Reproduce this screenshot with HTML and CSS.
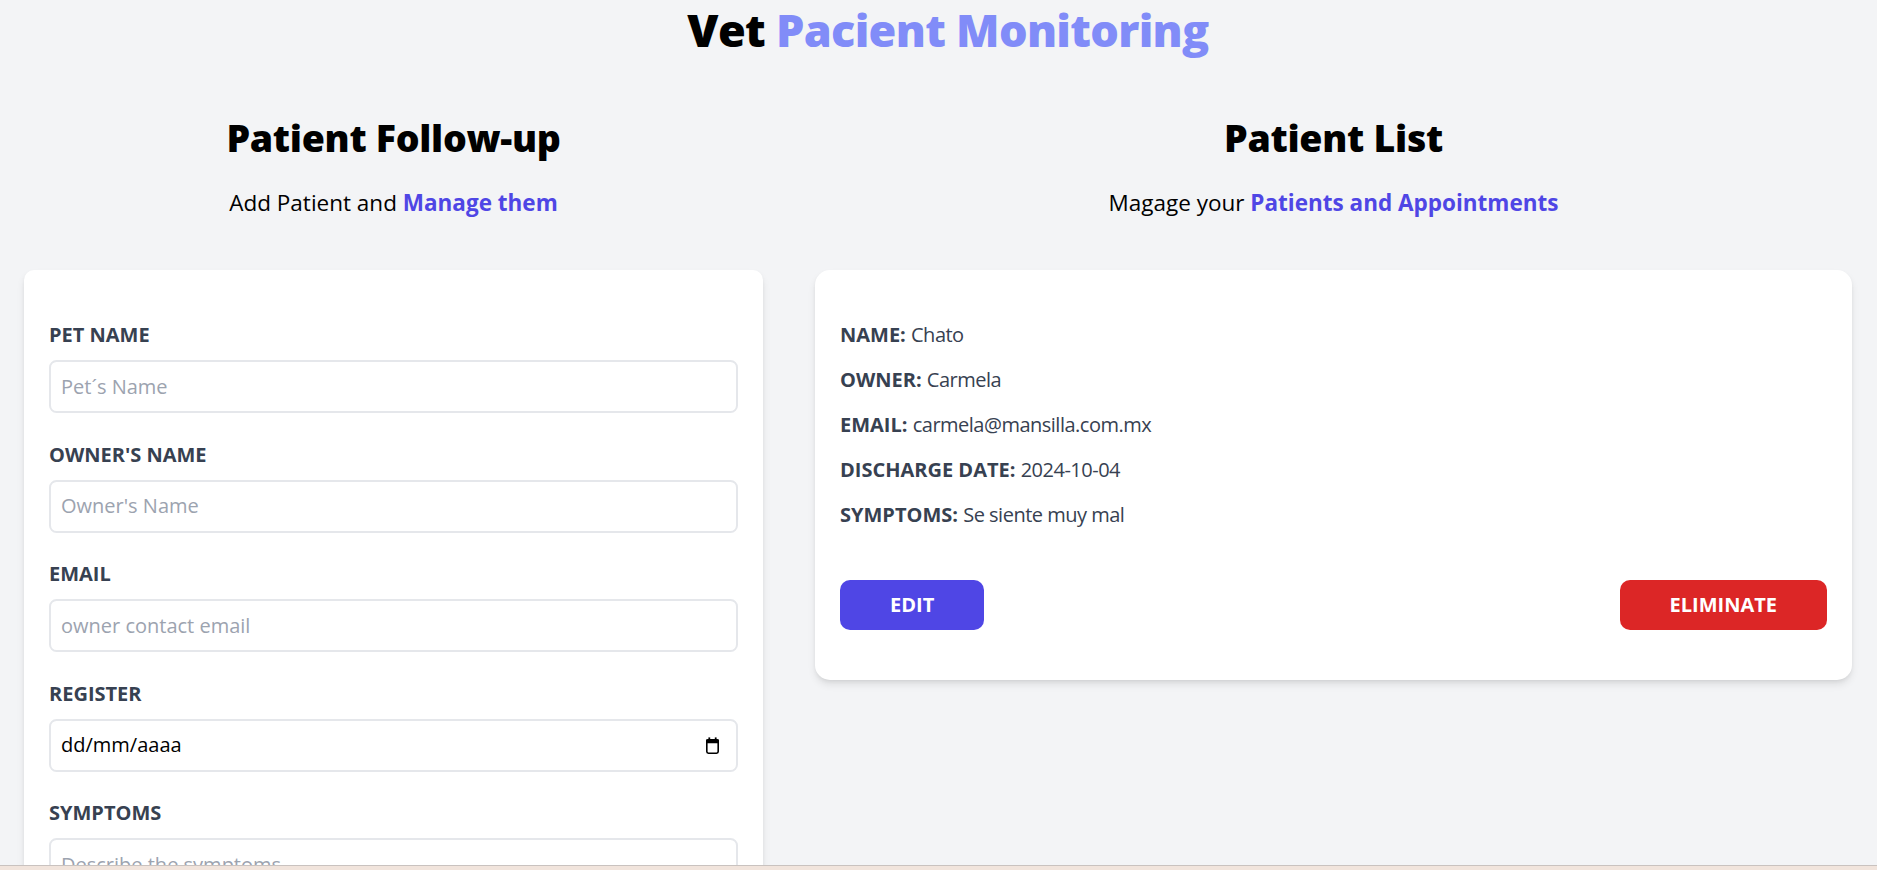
FILE: index.html
```html
<!DOCTYPE html>
<html lang="en">
<head>
<meta charset="utf-8">
<title>Vet Pacient Monitoring</title>
<link rel="stylesheet" href="styles.css">
</head>
<body>
<div class="app">
  <h1 class="title">Vet <span class="title-accent">Pacient Monitoring</span></h1>
  <div class="columns">
    <section class="col col-form">
      <h2 class="heading">Patient Follow-up</h2>
      <p class="sub">Add Patient and <span class="sub-accent">Manage them</span></p>
      <form class="card form-card">
        <div class="field">
          <label class="label" for="pet">Pet Name</label>
          <input class="input" id="pet" type="text" placeholder="Pet´s Name">
        </div>
        <div class="field">
          <label class="label" for="owner">Owner's Name</label>
          <input class="input" id="owner" type="text" placeholder="Owner's Name">
        </div>
        <div class="field">
          <label class="label" for="email">Email</label>
          <input class="input" id="email" type="email" placeholder="owner contact email">
        </div>
        <div class="field">
          <label class="label">Register</label>
          <div class="input date-input">
            <span class="date-text">dd/mm/aaaa</span>
            <svg class="cal-icon" width="15" height="17" viewBox="0 0 15 17" aria-hidden="true">
              <rect x="1.8" y="2.8" width="11.4" height="13.4" rx="1.6" fill="none" stroke="#000" stroke-width="1.6"/>
              <rect x="1" y="2.2" width="13" height="4" rx="1.2" fill="#000"/>
              <rect x="3.4" y="0.4" width="1.8" height="3" fill="#000"/>
              <rect x="9.8" y="0.4" width="1.8" height="3" fill="#000"/>
            </svg>
          </div>
        </div>
        <div class="field">
          <label class="label" for="sym">Symptoms</label>
          <textarea class="input textarea" id="sym" placeholder="Describe the symptoms"></textarea>
        </div>
      </form>
    </section>
    <section class="col col-list">
      <h2 class="heading">Patient List</h2>
      <p class="sub">Magage your <span class="sub-accent">Patients and Appointments</span></p>
      <div class="card list-card">
        <p class="row">Name: <span class="val">Chato</span></p>
        <p class="row">Owner: <span class="val">Carmela</span></p>
        <p class="row">Email: <span class="val">carmela@mansilla.com.mx</span></p>
        <p class="row">Discharge Date: <span class="val">2024-10-04</span></p>
        <p class="row">Symptoms: <span class="val">Se siente muy mal</span></p>
        <div class="actions">
          <button class="btn btn-edit" type="button">Edit</button>
          <button class="btn btn-del" type="button">Eliminate</button>
        </div>
      </div>
    </section>
  </div>
</div>
<div class="screen-edge"></div>
</body>
</html>
```

FILE: styles.css
```css
html, body {
  margin: 0;
  padding: 0;
  height: 100%;
  overflow: hidden;
}
body {
  background: #f3f4f6;
  font-family: "Open Sans", "Noto Sans", sans-serif;
  color: #000;
}
.app {
  height: 100vh;
  overflow: hidden;
  padding-top: 5px;
  box-sizing: border-box;
}
.title {
  margin: 0;
  padding-left: 19px;
  font-family: "Open Sans", sans-serif;
  font-weight: 800;
  font-size: 45px;
  line-height: 50px;
  letter-spacing: -0.7px;
  text-align: center;
  color: #000;
}
.title-accent { color: #818cf8; }

.columns {
  display: flex;
  gap: 52px;
  margin-top: 60px;
  padding: 0 25px 0 24px;
}
.col-form { flex: 0 0 739px; }
.col-list { flex: 1 1 auto; min-width: 0; }

.heading {
  margin: 0;
  font-family: "Open Sans", sans-serif;
  font-weight: 800;
  font-size: 37.5px;
  line-height: 45px;
  letter-spacing: -0.3px;
  text-align: center;
  color: #000;
}
.sub {
  margin: 25px 0 50px;
  font-size: 22.5px;
  line-height: 35px;
  text-align: center;
}
.sub-accent { color: #4f46e5; font-weight: 700; }

.card {
  background: #fff;
  box-shadow: 0 5px 8px -1px rgba(0,0,0,.1), 0 2px 5px -2px rgba(0,0,0,.1);
  padding: 50px 25px;
}
.form-card { border-radius: 10px; }
.list-card { border-radius: 15px; }

.field { margin-bottom: 26.5px; }
.label {
  display: block;
  text-transform: uppercase;
  font-weight: 700;
  font-size: 20px;
  line-height: 30px;
  color: #374151;
}
.input {
  display: block;
  width: 100%;
  box-sizing: border-box;
  margin-top: 10px;
  border: 2px solid #e5e7eb;
  border-radius: 7.5px;
  padding: 9.5px 10px;
  font-family: "Open Sans", "Noto Sans", sans-serif;
  font-size: 20px;
  line-height: 30px;
  color: #000;
  background: #fff;
  outline: none;
}
.input::placeholder { color: #9ca3af; }
.date-input {
  display: flex;
  align-items: center;
  justify-content: space-between;
  padding-right: 16px;
}
.date-text { color: #000; }
.cal-icon { display: block; }
.textarea { resize: none; height: 120px; }

.row {
  margin: 0 0 15px;
  font-weight: 700;
  text-transform: uppercase;
  font-size: 20px;
  line-height: 30px;
  color: #374151;
}
.val { font-weight: 400; text-transform: none; letter-spacing: -0.5px; }

.actions {
  display: flex;
  justify-content: space-between;
  margin-top: 50px;
}
.btn {
  border: none;
  border-radius: 10px;
  padding: 10px 50px;
  font-family: "Open Sans", "Noto Sans", sans-serif;
  font-weight: 700;
  font-size: 20px;
  line-height: 30px;
  text-transform: uppercase;
  color: #fff;
  cursor: pointer;
}
.btn-edit { background: #4f46e5; }
.btn-del { background: #dc2626; }

.screen-edge {
  position: fixed;
  left: 0;
  right: 0;
  bottom: 0;
  height: 4px;
  background: #f1e4dc;
  border-top: 1px solid #c9c2bf;
}
```
